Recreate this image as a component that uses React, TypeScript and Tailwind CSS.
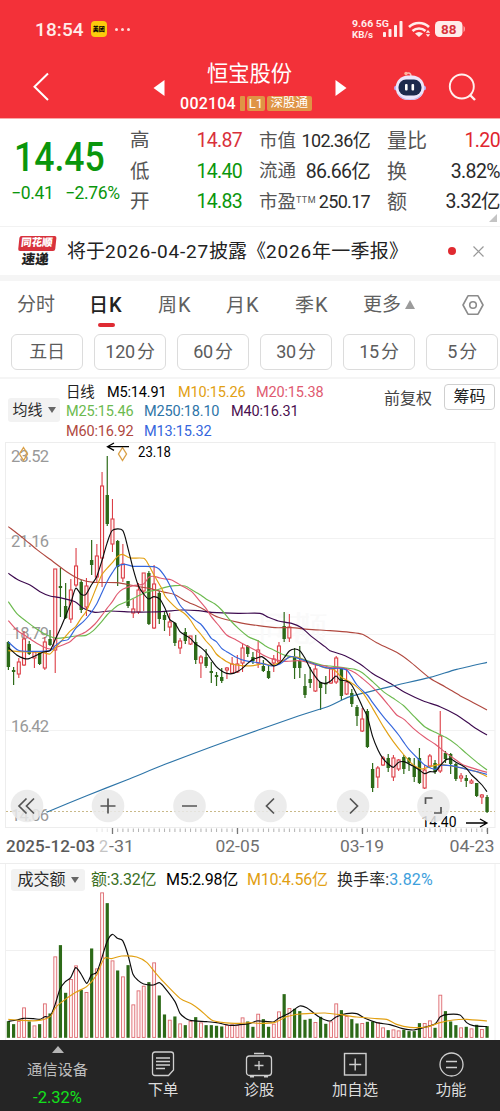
import clsx from "clsx";

type Candle = ["u" | "d", number, number, number, number];
type Point = [number, number];

const STEP = 5.203;
const FIRST_X = 8.4;

// direction, high, body top, body bottom, low
const candles: Candle[] = [
  ["d", 641, 642, 667, 670], ["d", 667, 670, 672, 685], ["u", 658, 662, 674, 678],
  ["u", 631, 639, 665, 666], ["d", 641, 644, 654, 655], ["u", 651, 652, 658, 668],
  ["d", 651, 653, 664, 665], ["u", 637, 642, 668, 670], ["d", 630, 639, 645, 646],
  ["u", 569, 569, 650, 673], ["d", 568, 586, 588, 617], ["d", 583, 606, 618, 619],
  ["u", 579, 590, 619, 623], ["u", 548, 566, 585, 587], ["d", 580, 582, 610, 613],
  ["u", 578, 586, 607, 616], ["d", 540, 560, 565, 575], ["u", 544, 556, 577, 582],
  ["u", 472, 486, 558, 587], ["d", 456, 495, 524, 526], ["u", 499, 519, 544, 552],
  ["d", 540, 541, 567, 586], ["u", 544, 564, 578, 582], ["d", 581, 581, 606, 608],
  ["u", 599, 609, 613, 618], ["u", 583, 590, 612, 614], ["u", 573, 573, 591, 611],
  ["d", 571, 573, 624, 625], ["u", 565, 584, 628, 629], ["d", 591, 593, 619, 624],
  ["d", 612, 615, 620, 631], ["u", 613, 622, 627, 636], ["d", 622, 623, 643, 646],
  ["u", 638, 641, 648, 654], ["d", 628, 632, 641, 644], ["u", 636, 636, 644, 645],
  ["d", 635, 642, 660, 664], ["u", 655, 657, 663, 678], ["d", 649, 657, 666, 668],
  ["d", 662, 671, 673, 683], ["d", 672, 675, 677, 686], ["d", 668, 677, 681, 683],
  ["u", 667, 668, 670, 679], ["u", 657, 664, 673, 674], ["u", 655, 664, 672, 673],
  ["u", 644, 648, 663, 672], ["d", 645, 646, 654, 657], ["d", 652, 657, 661, 664],
  ["u", 640, 650, 663, 668], ["d", 660, 666, 671, 672], ["d", 665, 671, 678, 679],
  ["u", 655, 659, 663, 672], ["u", 642, 646, 662, 664], ["d", 612, 626, 639, 642],
  ["u", 614, 627, 638, 642], ["d", 648, 657, 668, 679], ["d", 646, 661, 668, 678],
  ["d", 674, 686, 695, 698], ["d", 667, 679, 683, 688], ["u", 665, 669, 691, 692],
  ["d", 682, 682, 688, 710], ["d", 676, 683, 684, 694], ["u", 667, 669, 683, 684],
  ["u", 656, 658, 682, 684], ["d", 668, 669, 696, 700], ["u", 668, 682, 694, 695],
  ["d", 689, 693, 704, 707], ["d", 705, 707, 716, 726], ["u", 708, 719, 731, 732],
  ["d", 709, 711, 747, 748], ["d", 763, 769, 788, 792], ["u", 766, 768, 777, 788],
  ["u", 756, 758, 765, 766], ["d", 754, 758, 768, 772], ["u", 755, 758, 777, 781],
  ["u", 759, 760, 769, 771], ["d", 755, 757, 769, 774], ["d", 757, 758, 763, 771],
  ["d", 758, 767, 777, 782], ["d", 748, 758, 783, 784], ["u", 765, 770, 788, 789],
  ["u", 754, 756, 766, 768], ["d", 760, 763, 772, 774], ["u", 711, 736, 771, 773],
  ["d", 751, 753, 759, 763], ["d", 753, 754, 764, 774], ["d", 763, 764, 779, 781],
  ["u", 773, 776, 778, 782], ["d", 775, 778, 781, 787], ["u", 779, 781, 783, 784],
  ["d", 783, 783, 796, 797], ["u", 794, 795, 797, 804], ["d", 795, 797, 812, 813],
];

const volumes = [
  50, 41, 50, 91, 49, 37, 41, 103, 73, 244, 278, 135, 176, 217, 144, 137, 268, 208, 436, 404, 232, 202,
  184, 218, 100, 142, 156, 167, 226, 127, 70, 54, 64, 43, 38, 50, 62, 46, 38, 38, 36, 34, 38, 40, 38, 61,
  49, 33, 72, 56, 33, 42, 79, 131, 89, 87, 80, 54, 57, 47, 63, 42, 49, 103, 83, 65, 56, 43, 44, 48, 49, 47,
  31, 23, 25, 22, 24, 20, 20, 44, 44, 52, 30, 129, 80, 49, 38, 31, 33, 28, 39, 26, 35,
];

// Each line is stored in sections, in thirds of a pixel from the section's origin.
const priceOrigins: Point[] = [[0, 440], [165, 560], [330, 600]];
const volumeOrigins: Point[] = [[0, 885], [250, 860]];

const priceLines: { color: string; sections: Point[][] }[] = [
  {
    color: "#b0483f",
    sections: [
      [[25, 260], [70, 295], [110, 328], [150, 358], [200, 395], [240, 418], [280, 427], [350, 428], [400, 437], [450, 446]],
      [[0, 97], [30, 104], [60, 122], [110, 145], [160, 172], [220, 187], [280, 197], [330, 203], [380, 203], [430, 208]],
      [[0, 92], [60, 97], [97, 103], [140, 128], [200, 157], [240, 185], [300, 235], [345, 260], [390, 287], [430, 308], [471, 330]],
    ],
  },
  {
    color: "#3d0b4f",
    sections: [
      [[25, 400], [55, 420], [90, 435], [120, 455], [150, 468], [180, 473], [225, 485], [250, 505], [285, 517], [330, 513], [400, 516], [450, 516]],
      [[0, 154], [50, 150], [100, 152], [140, 157], [220, 160], [285, 160], [310, 172], [340, 183], [380, 190], [410, 203], [440, 230], [480, 260]],
      [[0, 152], [45, 167], [90, 192], [130, 222], [180, 250], [230, 280], [280, 303], [330, 320], [380, 345], [430, 380], [471, 405]],
    ],
  },
  {
    color: "#2e75a8",
    sections: [
      [[140, 1117], [260, 1067], [380, 1020]],
      [[0, 613], [140, 560], [280, 510], [400, 468]],
      [[0, 317], [60, 290], [180, 260], [300, 232], [380, 208], [471, 187]],
    ],
  },
  {
    color: "#6cba4f",
    sections: [
      [[25, 485], [50, 520], [80, 545], [110, 567], [140, 585], [170, 595], [200, 592], [227, 588], [258, 586], [280, 572], [305, 545], [321, 525], [337, 510], [352, 497], [375, 487], [400, 475], [425, 463], [446, 454], [470, 450]],
      [[0, 82], [30, 77], [60, 78], [85, 92], [107, 105], [123, 117], [150, 132], [170, 150], [195, 180], [220, 205], [250, 230], [280, 243], [300, 257], [326, 270], [360, 286], [400, 293], [430, 303], [470, 315]],
      [[0, 198], [40, 203], [75, 208], [97, 218], [128, 245], [160, 275], [190, 295], [222, 318], [253, 350], [284, 380], [316, 397], [347, 412], [378, 433], [409, 460], [441, 487], [471, 510]],
    ],
  },
  {
    color: "#e05a70",
    sections: [
      [[25, 542], [50, 570], [80, 590], [110, 610], [140, 625], [155, 627], [180, 618], [210, 605], [227, 590], [258, 575], [285, 552], [305, 527], [321, 505], [337, 485], [352, 462], [368, 448], [400, 437], [431, 432], [446, 412], [462, 409], [480, 414]],
      [[0, 57], [20, 60], [50, 77], [80, 95], [100, 118], [123, 145], [139, 170], [160, 195], [185, 225], [210, 238], [240, 255], [270, 270], [300, 288], [326, 298], [360, 304], [400, 302], [420, 305], [451, 315], [480, 318]],
      [[0, 203], [30, 203], [50, 207], [75, 218], [97, 235], [128, 262], [150, 285], [175, 315], [200, 345], [222, 358], [250, 385], [284, 412], [316, 433], [347, 458], [378, 480], [400, 495], [440, 508], [471, 517]],
    ],
  },
  {
    color: "#e2a012",
    sections: [
      [[25, 632], [60, 635], [100, 636], [130, 638], [150, 642], [165, 625], [196, 590], [212, 572], [227, 560], [243, 535], [258, 515], [274, 480], [290, 440], [305, 405], [321, 385], [337, 368], [352, 350], [368, 343], [390, 354], [431, 355], [446, 375], [462, 405], [485, 445]],
      [[0, 108], [14, 125], [35, 145], [60, 162], [76, 180], [92, 205], [107, 222], [123, 243], [139, 260], [154, 282], [170, 295], [185, 305], [200, 312], [230, 317], [265, 317], [295, 311], [320, 316], [345, 307], [373, 292], [400, 292], [420, 302], [451, 312], [480, 324]],
      [[5, 206], [20, 216], [35, 232], [50, 240], [75, 256], [100, 280], [128, 325], [160, 380], [190, 425], [222, 465], [250, 495], [275, 507], [300, 500], [330, 493], [363, 498], [400, 505], [440, 515], [471, 530]],
    ],
  },
  {
    color: "#3566dd",
    sections: [
      [[25, 606], [55, 631], [90, 634], [150, 632], [165, 618], [185, 603], [205, 598], [227, 565], [250, 545], [270, 522], [290, 492], [305, 460], [321, 425], [337, 398], [352, 378], [375, 373], [400, 379], [431, 379], [462, 380], [477, 387]],
      [[0, 50], [14, 75], [30, 108], [45, 135], [60, 152], [76, 168], [92, 182], [107, 192], [123, 212], [139, 235], [154, 245], [170, 265], [185, 275], [210, 290], [240, 302], [290, 310], [320, 318], [345, 312], [375, 290], [400, 295], [430, 305], [470, 320]],
      [[0, 205], [30, 205], [50, 210], [65, 230], [81, 255], [112, 285], [128, 308], [160, 350], [190, 385], [206, 405], [222, 428], [237, 448], [268, 480], [284, 495], [316, 508], [331, 496], [363, 497], [400, 505], [440, 515], [471, 523]],
    ],
  },
  {
    color: "#0c0c0c",
    sections: [
      [[25, 622], [50, 645], [71, 655], [87, 656], [105, 648], [130, 636], [150, 632], [165, 600], [180, 568], [196, 530], [212, 490], [227, 445], [243, 463], [258, 463], [274, 435], [290, 410], [305, 365], [321, 310], [337, 271], [368, 271], [384, 325], [399, 385], [415, 437], [431, 462], [446, 477], [462, 470], [480, 478]],
      [[0, 145], [14, 178], [30, 190], [45, 215], [60, 225], [76, 235], [92, 252], [107, 262], [123, 277], [139, 300], [154, 320], [170, 333], [185, 340], [201, 341], [216, 335], [232, 325], [248, 310], [264, 298], [279, 293], [290, 290], [305, 300], [326, 318], [345, 308], [360, 290], [373, 273], [389, 267], [404, 272], [420, 295], [435, 325], [451, 350], [466, 367], [482, 370]],
      [[2, 243], [18, 228], [30, 240], [50, 243], [65, 255], [81, 285], [97, 320], [112, 350], [128, 410], [144, 450], [159, 476], [175, 492], [190, 502], [206, 487], [222, 485], [237, 492], [253, 500], [268, 510], [284, 521], [300, 515], [316, 515], [331, 497], [347, 480], [363, 477], [378, 487], [394, 495], [409, 505], [425, 525], [441, 540], [456, 555], [471, 575]],
    ],
  },
];

const volumeLines: { color: string; sections: Point[][] }[] = [
  {
    color: "#0c0c0c",
    sections: [
      [[25, 409], [50, 405], [71, 400], [100, 401], [120, 403], [135, 395], [150, 395], [165, 360], [180, 312], [196, 290], [212, 278], [227, 248], [243, 267], [260, 295], [274, 270], [290, 262], [305, 220], [321, 170], [337, 148], [352, 160], [368, 167], [384, 210], [399, 268], [415, 287], [431, 297], [460, 300], [478, 293], [493, 307], [525, 350], [540, 385], [560, 402], [575, 407], [620, 410], [650, 413], [690, 421], [720, 419]],
      [[0, 490], [20, 483], [45, 484], [70, 486], [86, 475], [102, 467], [120, 458], [149, 438], [170, 443], [190, 458], [211, 473], [240, 483], [258, 471], [289, 461], [320, 461], [345, 475], [380, 488], [420, 494], [455, 505], [490, 510], [520, 503], [555, 492], [571, 470], [595, 463], [630, 465], [650, 488], [670, 497], [711, 500]],
    ],
  },
  {
    color: "#e2a012",
    sections: [
      [[25, 403], [60, 406], [110, 407], [150, 395], [165, 370], [180, 355], [227, 322], [260, 305], [290, 270], [305, 235], [315, 218], [335, 221], [365, 213], [410, 216], [440, 232], [462, 258], [490, 290], [540, 340], [575, 357], [600, 375], [635, 405], [665, 412], [720, 415]],
      [[0, 488], [30, 490], [75, 487], [110, 470], [150, 462], [190, 460], [225, 459], [270, 464], [320, 471], [380, 476], [410, 478], [440, 493], [480, 502], [530, 501], [570, 488], [610, 480], [650, 478], [711, 483]],
    ],
  },
];

function linePath(sections: Point[][], origins: Point[]) {
  const pts = sections.flatMap((s, i) =>
    s.map(([x, y]): Point => [origins[i][0] + x / 3, origins[i][1] + y / 3]),
  );
  let d = `M${pts[0][0]} ${pts[0][1]}`;
  for (let i = 0; i < pts.length - 1; i++) {
    const a = pts[i - 1] ?? pts[i];
    const b = pts[i];
    const c = pts[i + 1];
    const e = pts[i + 2] ?? c;
    d += `C${b[0] + (c[0] - a[0]) / 8} ${b[1] + (c[1] - a[1]) / 8} ${c[0] - (e[0] - b[0]) / 8} ${c[1] - (e[1] - b[1]) / 8} ${c[0]} ${c[1]}`;
  }
  return d;
}

const stats = [
  ["高", "14.87", "text-[#d9303a]", "市值", "102.36亿", "量比", "1.20", "text-[#e0262f]"],
  ["低", "14.40", "text-[#0a960c]", "流通", "86.66亿", "换", "3.82%", "text-[#2b2b2b]"],
  ["开", "14.83", "text-[#0a960c]", "市盈", "250.17", "额", "3.32亿", "text-[#2b2b2b]"],
];

const periods = ["五日", "120 分", "60 分", "30 分", "15 分", "5 分"];

function Header() {
  return (
    <header className="h-[118px] bg-[#f33139] text-white">
      <div className="flex h-[58px] items-center pl-[35px] pr-[34px]">
        <span className="text-[19px] font-medium leading-none tracking-[0.1px] text-[#ffecea]">18:54</span>
        <span className="ml-[7px] flex size-4 items-center justify-center rounded-[4px] bg-[#fccb0c] text-[6px] font-black leading-none text-black">
          美团
        </span>
        <span className="ml-[8px] flex gap-[3px]">
          <i className="size-[3px] rounded-full bg-[#ffdcd9]" />
          <i className="size-[3px] rounded-full bg-[#ffdcd9]" />
          <i className="size-[3px] rounded-full bg-[#ffdcd9]" />
        </span>
        <svg className="ml-auto h-6 w-[120px]" viewBox="346 17 120 24" fill="#ffecea">
          <text x="352" y="26.500" fontSize="9.700" fontWeight="700" textLength="37" lengthAdjust="spacingAndGlyphs">9.66 5G</text>
          <text x="352" y="37.500" fontSize="9.700" fontWeight="700" textLength="21" lengthAdjust="spacingAndGlyphs">KB/s</text>
          <rect x="383" y="32" width="3" height="5" rx=".7" />
          <rect x="388.500" y="29" width="3" height="8" rx=".7" />
          <rect x="394" y="25" width="3" height="12" rx=".7" />
          <rect x="399.500" y="21" width="3" height="16" rx=".7" />
          <g fill="none" stroke="#ffecea" strokeWidth="2.600">
            <path d="M409 27a14.500 14.500 0 0 1 20 0" />
            <path d="M412.500 31a9.500 9.500 0 0 1 13 0" />
          </g>
          <path d="M415 33.500a6 6 0 0 1 8 0l-4 3.500z" />
          <path d="M428 30l2.200 2.800h-4.400zM428 37l-2.200-2.800h4.400z" />
          <rect x="435" y="21" width="27.500" height="16" rx="4.500" />
          <path d="M463.500 26c2 .5 2 5.500 0 6z" opacity=".6" />
          <text x="448.700" y="33.800" fontSize="13.500" fontWeight="700" fill="#d8323a" textAnchor="middle">88</text>
        </svg>
      </div>
      <div className="flex h-[60px] items-center">
        <svg className="mb-[3px] ml-[30px] h-8 w-6" viewBox="0 0 24 32" fill="none" stroke="white" strokeWidth="2">
          <path d="M18 2.500L4.500 15.800L18 29" />
        </svg>
        <svg className="ml-[99px] h-4 w-3" viewBox="0 0 12 16" fill="white">
          <path d="M11.500 0v16L.5 8z" />
        </svg>
        <div className="ml-[12px] flex w-[138px] flex-col items-center">
          <h1 className="-mt-[3px] ml-[7px] text-[21.300px] leading-[28px]">恒宝股份</h1>
          <div className="mt-[6px] flex h-[20px] items-center gap-[2px] whitespace-nowrap leading-none">
            <span className="mr-[2px] text-[16px] font-medium tracking-[0.2px]">002104</span>
            <i className="h-[15px] w-[5px] rounded-[1px] bg-[#df9445]" />
            <span className="flex h-[15px] w-[18px] items-center justify-center rounded-[2px] bg-[#df9445] text-[13px]">L1</span>
            <span className="flex h-[15px] w-[45px] items-center justify-center rounded-[2px] bg-[#df9445] text-[12.500px]">深股通</span>
          </div>
        </div>
        <svg className="ml-[20px] h-4 w-3" viewBox="0 0 12 16" fill="white">
          <path d="M.5 0v16L11.500 8z" />
        </svg>
        <svg className="mb-[4px] ml-[47px] h-8 w-8" viewBox="394 70 32 32">
          <path d="M406 73.500c3-1 5-.5 5 3" fill="none" stroke="#f7b9b4" strokeWidth="1.600" />
          <circle cx="406" cy="73.500" r="1.700" fill="#ffb49a" />
          <circle cx="396.500" cy="88" r="2.500" fill="#b9a8f0" />
          <circle cx="423.500" cy="88" r="2.500" fill="#b9a8f0" />
          <rect x="395.800" y="75.500" width="28.500" height="24.500" rx="12" fill="#ece6fb" />
          <path d="M398 93c4 8 19 9 24 0-1 5-6 7-12 7s-11-2-12-7" fill="#c4b4ee" />
          <rect x="398.500" y="79.500" width="23" height="16" rx="7.500" fill="#1d2a4d" />
          <rect x="405" y="84" width="2.600" height="6.500" rx="1" fill="white" />
          <rect x="411.500" y="84" width="2.600" height="6.500" rx="1" fill="white" />
        </svg>
        <svg className="mb-[2px] ml-[21px] h-8 w-8" viewBox="447 71 32 32" fill="none" stroke="#fff0ee" strokeWidth="1.900">
          <circle cx="461.800" cy="86.500" r="12" />
          <path d="M470 95l5 5" strokeWidth="2.400" />
        </svg>
      </div>
    </header>
  );
}

function Quote() {
  return (
    <section className="flex h-[109px] border-b border-t border-b-[#f2f2f2] border-t-[#f9a9a8]">
      <div className="w-[130px] pt-[19px] text-[#0a960c]">
        <div className="ml-[14px] w-fit origin-left scale-x-[0.89] text-[40px] font-medium leading-[40px]">14.45</div>
        <div className="mt-[5px] flex text-[17.500px] leading-[20px] tracking-[-0.3px]">
          <span className="ml-[11px] w-[54px]">−0.41</span>
          <span className="w-[60px] tracking-[-0.4px]">−2.76%</span>
        </div>
      </div>
      <div className="flex h-[107px] flex-1 flex-col pt-[7px]">
        {stats.map(([a, av, aColor, b, bv, c, cv, cColor], i) => (
          <div key={a} className="flex h-[30.400px] shrink-0 items-center text-[19.500px] leading-none text-[#2b2b2b]">
            <span className="w-[40px] text-[#555]">{a}</span>
            <span className={clsx("w-[72px] text-right tracking-[-0.7px]", aColor)}>{av}</span>
            <span className="ml-[17px] whitespace-nowrap text-[18.500px] text-[#555]">
              {b}
              {i === 2 && <sup className="text-[9px] tracking-[0.4px]">TTM</sup>}
            </span>
            <span className={clsx("ml-auto whitespace-nowrap text-right tracking-[-0.7px]", i !== 1 && "text-[18px]")}>
              {bv}
            </span>
            <span className="ml-[17px] w-[44px] whitespace-nowrap text-[20px] text-[#555]">{c}</span>
            <span className={clsx("w-[69px] text-right tracking-[-0.6px]", cColor)}>{cv}</span>
          </div>
        ))}
        <svg className="-mt-[3px] ml-auto mr-[3px] h-2 w-2" viewBox="0 0 8 8" fill="#c4c4c4">
          <path d="M8 0v8H0z" />
        </svg>
      </div>
    </section>
  );
}

function News() {
  return (
    <section className="flex h-[54px] items-center border-b-[6px] border-[#f5f5f5] text-[#222]">
      <div className="ml-[17px] flex w-[38px] -skew-x-6 flex-col items-center font-black leading-none">
        <span className="flex h-[15px] w-[37px] items-center justify-center rounded-[2px] bg-[#d8323c] text-[10.500px] text-white">
          同花顺
        </span>
        <span className="mt-[2px] text-[13.500px]">速递</span>
      </div>
      <p className="ml-[12px] w-[345px] whitespace-nowrap text-[19px] leading-none">
        将于<span className="tracking-[0.8px]">2026-04-27</span>披露《<span className="tracking-[0.8px]">2026</span>
        <span className="tracking-[0.3px]">年一季报》</span>
      </p>
      <i className="ml-[36px] size-[8px] rounded-full bg-[#e02a30]" />
      <svg className="ml-[17px] size-[11px]" viewBox="0 0 11 11" stroke="#999" strokeWidth="1.200">
        <path d="M.5.5l10 10M10.500.5l-10 10" />
      </svg>
    </section>
  );
}

function Tabs() {
  const k = <span className="ml-[1px] text-[20px]">K</span>;
  return (
    <section className="h-[98px] border-b-2 border-[#f5f5f5]">
      <nav className="flex h-[47px] items-center pl-[17px] text-[19px] leading-none text-[#606060]">
        <span className="w-[72px]">分时</span>
        <span className="relative w-[69px] font-medium text-[#222]">
          日{k}
          <i className="absolute left-[9px] top-[28px] h-[4px] w-[17px] rounded-full bg-[#df2b33]" />
        </span>
        <span className="w-[68px]">周{k}</span>
        <span className="w-[69px]">月{k}</span>
        <span className="w-[68px]">季{k}</span>
        <span className="w-[40px]">更多</span>
        <svg className="ml-[2px] h-[9px] w-[10px]" viewBox="0 0 10 9" fill="#9b9b9b">
          <path d="M5 0l5 9H0z" />
        </svg>
        <svg className="ml-[47px] size-[22px]" viewBox="0 0 22 22" fill="none" stroke="#8b8b8b" strokeWidth="1.600">
          <path d="M6 1.800h10L21 11l-5 9.200H6L1 11z" strokeLinejoin="round" />
          <circle cx="11" cy="11" r="3.300" />
        </svg>
      </nav>
      <div className="flex gap-[11px] pl-[11px] pt-[6px]">
        {periods.map((p) => (
          <button
            key={p}
            className="h-[36px] w-[72px] shrink-0 rounded-[6px] border border-[#dcdcdc] text-[18px] leading-none tracking-[-0.3px] text-[#5c5c5c] [word-spacing:-2px]"
          >
            {p}
          </button>
        ))}
      </div>
    </section>
  );
}

function DropChip({ label, className }: { label: string; className?: string }) {
  return (
    <span className={clsx("flex items-center justify-center gap-[5px] rounded-[3px] bg-[#f2f2f2] leading-none text-[#2b2b2b]", className)}>
      {label}
      <svg className="h-[6px] w-[8px]" viewBox="0 0 8 6" fill="#666">
        <path d="M0 0h8L4 6z" />
      </svg>
    </span>
  );
}

function Legend() {
  return (
    <section className="flex h-[62px] items-start">
      <DropChip label="均线" className="ml-[8px] mt-[19px] h-[24px] w-[52px] text-[15px]" />
      <div className="ml-[6px] mt-[4px] w-[311px] whitespace-nowrap text-[14.500px] leading-[19.300px] tracking-[-0.17px]">
        <div className="flex">
          <span className="w-[41px] text-[#222]">日线</span>
          <span className="w-[71px] text-black">M5:14.91</span>
          <span className="w-[78px] text-[#e2a012]">M10:15.26</span>
          <span className="text-[#e05a70]">M20:15.38</span>
        </div>
        <div className="flex">
          <span className="w-[78px] text-[#6cba4f]">M25:15.46</span>
          <span className="w-[87px] text-[#2e75a8]">M250:18.10</span>
          <span className="text-[#4a0f50]">M40:16.31</span>
        </div>
        <div className="flex">
          <span className="w-[78px] text-[#b0483f]">M60:16.92</span>
          <span className="text-[#3566dd]">M13:15.32</span>
        </div>
      </div>
      <span className="ml-[7px] mt-[11px] text-[16px] leading-[17px] text-[#444]">前复权</span>
      <span className="ml-[12px] mt-[5px] flex h-[26px] w-[51px] items-center justify-center rounded-[4px] border border-[#cfcfcf] text-[16px] leading-none text-[#222]">
        筹码
      </span>
    </section>
  );
}

function PriceChart() {
  return (
    <svg className="block h-[422px] w-[500px]" viewBox="0 441 500 422" fontFamily="Roboto">
      <rect x="5.500" y="442.500" width="489.500" height="385" fill="white" stroke="#ededed" />
      <path d="M6 538.500h489M6 634.500h489M6 730.500h489" stroke="#f2f2f2" />
      <text x="258" y="640" fontSize="34" fill="#fafafa" textLength="70">同花顺</text>
      <path d="M6 811.500h489" stroke="#c9b98a" strokeWidth="1" strokeDasharray="2 2" />
      <g fill="#999" fontSize="16.500">
        <text x="11" y="461.500" textLength="38">23.52</text>
        <text x="11" y="546.500" textLength="38">21.16</text>
        <text x="12" y="639" textLength="37">18.79</text>
        <text x="11" y="731.500" textLength="38">16.42</text>
        <text x="11" y="821" textLength="38">14.06</text>
      </g>
      <g>
        {candles.map(([dir, high, top, bottom, low], i) => {
          const x = FIRST_X + i * STEP;
          const h = Math.max(bottom - top, 1.5);
          return dir === "d" ? (
            <g key={i} fill="#2d6a18">
              <rect x={x - 0.6} y={high} width={1.2} height={low - high} />
              <rect x={x - 1.7} y={top} width={3.4} height={h} />
            </g>
          ) : (
            <g key={i} stroke="#dc3f47" strokeWidth="1.100" fill="#fff3f2">
              <path d={`M${x} ${high}V${low}`} />
              <rect x={x - 1.5} y={top} width={3} height={h} />
            </g>
          );
        })}
      </g>
      <g fill="none" strokeWidth="1.150">
        {priceLines.map((l) => (
          <path key={l.color} d={linePath(l.sections, priceOrigins)} stroke={l.color} />
        ))}
      </g>
      <g fill="none" stroke="#dba24a" strokeWidth="1.400">
        <path d="M23.500 447.500l4 6.500-4 6.500-4-6.500zM122.500 447.500l4 6.500-4 6.500-4-6.500z" />
      </g>
      <g fill="none" stroke="black" strokeWidth="1.300">
        <path d="M129 446.700h-21M114 443l-6.500 3.700 6.500 3.700" />
        <path d="M466 823h20.500M480 819l7 4-7 4" />
      </g>
      <g fontSize="15.500">
        <text x="138" y="456.500" textLength="33" lengthAdjust="spacingAndGlyphs">23.18</text>
        <text x="421.500" y="827" textLength="35" lengthAdjust="spacingAndGlyphs">14.40</text>
      </g>
      <g fill="#e9e9e9" fillOpacity=".85">
        {[27, 108, 189.5, 270.5, 353, 433.5].map((cx) => (
          <circle key={cx} cx={cx} cy="806" r="16.300" />
        ))}
      </g>
      <g fill="none" stroke="#555" strokeWidth="1.700">
        <path d="M26.500 798.500l-7.500 7.500 7.500 7.500M34 798.500l-7.500 7.500 7.500 7.500" />
        <path d="M100.500 806h15M108 798.500v15M182 806h15" />
        <path d="M274 798.500l-7.500 7.500 7.500 7.500M350 798.500l7.500 7.500-7.500 7.500" />
        <path d="M425.500 804v-6h7M441 807v6h-7" />
      </g>
      <g stroke="#aaa">
        {Array.from({ length: 76 }, (_, i) => {
          const x = 96.9 + i * STEP;
          return <path key={i} d={`M${x} 828.500v3.500`} opacity={i < 3 ? 0.3 : 0.9} />;
        })}
        <path d="M112.500 828v6M237.500 828v6M362.500 828v6M487.500 828v6" stroke="#777" strokeWidth="1.300" />
      </g>
      <g fill="#707070" fontSize="16.200">
        <text x="6" y="852" textLength="89" lengthAdjust="spacingAndGlyphs" fontWeight="500" fill="#5a5a5a">2025-12-03</text>
        <text x="99" y="852" fill="#c4c4c4">2</text>
        <text x="109" y="852" textLength="25" lengthAdjust="spacingAndGlyphs">-31</text>
        <text x="215.500" y="852" textLength="44" lengthAdjust="spacingAndGlyphs">02-05</text>
        <text x="340" y="852" textLength="44" lengthAdjust="spacingAndGlyphs">03-19</text>
        <text x="449.500" y="852" textLength="45" lengthAdjust="spacingAndGlyphs">04-23</text>
      </g>
    </svg>
  );
}

function VolumePanel() {
  return (
    <section className="h-[177px]">
      <div className="flex h-[32px] items-center border-t border-[#ededed] pl-[11px] pt-[1px] text-[16px] leading-none tracking-[-0.25px]">
        <DropChip label="成交额" className="h-[22px] w-[74px] text-[16px] tracking-normal" />
        <span className="ml-[6px] w-[75px] whitespace-nowrap text-[#3b6f1f]">额:3.32亿</span>
        <span className="w-[81px] whitespace-nowrap text-black">M5:2.98亿</span>
        <span className="w-[90px] whitespace-nowrap text-[#e2a012]">M10:4.56亿</span>
        <span className="whitespace-nowrap tracking-[0.1px] text-[#2b2b2b]">
          换手率:<span className="text-[#3ea0dc]">3.82%</span>
        </span>
      </div>
      <svg className="block h-[145px] w-[500px] overflow-visible" viewBox="0 895 500 145">
        <path d="M5.500 864v176M495 864v176M6 950.500h489" stroke="#f0f0f0" />
        <g>
          {volumes.map((v, i) => {
            const x = FIRST_X + i * STEP;
            const h = v / 3;
            return candles[i][0] === "d" ? (
              <rect key={i} x={x - 1.6} y={1037.8 - h} width={3.2} height={h} fill="#2d6a18" />
            ) : (
              <rect key={i} x={x - 1.4} y={1038.2 - h} width={2.9} height={h - 0.8} fill="#fff6f5" stroke="#dd6a70" strokeWidth=".9" />
            );
          })}
        </g>
        <g fill="none" strokeWidth="1.150">
          {volumeLines.map((l) => (
            <path key={l.color} d={linePath(l.sections, volumeOrigins)} stroke={l.color} />
          ))}
        </g>
      </svg>
    </section>
  );
}

function BottomBar() {
  const item = "flex flex-col items-center gap-[4px] pt-[10px]";
  const icon = "h-[28px] w-[28px]";
  return (
    <footer className="grid h-[71px] grid-cols-[115px_repeat(4,96px)] bg-[#252525] text-[15.300px] leading-[17px] text-[#dcdcdc]">
      <div className="flex flex-col items-center pt-[6px]">
        <svg className="h-[7px] w-[12px]" viewBox="0 0 12 7" fill="#b5b5b5">
          <path d="M6 0l6 7H0z" />
        </svg>
        <span className="mt-[9px] text-[#bdbdbd]">通信设备</span>
        <span className="mt-[10px] text-[16.500px] text-[#14e01c]">-2.32%</span>
      </div>
      <div className={item}>
        <svg className={icon} viewBox="0 0 28 28" fill="none" stroke="#cfcfcf" strokeWidth="1.300">
          <path d="M6 2h16q2.500 0 2.500 2.500V20l-5 5.500H6Q3.500 25.500 3.500 23V4.500Q3.500 2 6 2z" />
          <path d="M7 8h14M7 11.500h14M7 15h14M7 18.500h9" />
        </svg>
        下单
      </div>
      <div className={item}>
        <svg className={icon} viewBox="0 0 28 28" fill="none" stroke="#cfcfcf" strokeWidth="1.300">
          <rect x="1.500" y="6" width="25" height="19.500" rx="3" />
          <path d="M9 3.500h10M14 11v9M9.500 15.500h9" />
          <path d="M5 26.500h4M19 26.500h4" strokeWidth="1.800" />
        </svg>
        诊股
      </div>
      <div className={item}>
        <svg className={icon} viewBox="0 0 28 28" fill="none" stroke="#cfcfcf" strokeWidth="1.400">
          <rect x="3.500" y="3.500" width="21.500" height="21.500" />
          <path d="M14.200 8.500v12M8.200 14.500h12" />
        </svg>
        加自选
      </div>
      <div className={item}>
        <svg className={icon} viewBox="0 0 28 28" fill="none" stroke="#cfcfcf" strokeWidth="1.300">
          <circle cx="14.500" cy="14.500" r="11.500" />
          <path d="M9 11.500h11M9 17.500h11" />
        </svg>
        功能
      </div>
    </footer>
  );
}

export default function App() {
  return (
    <main className="h-[1111px] w-[500px] overflow-hidden bg-white font-[Roboto,'Noto_Sans_CJK_SC',sans-serif]">
      <Header />
      <Quote />
      <News />
      <Tabs />
      <Legend />
      <PriceChart />
      <VolumePanel />
      <BottomBar />
    </main>
  );
}
